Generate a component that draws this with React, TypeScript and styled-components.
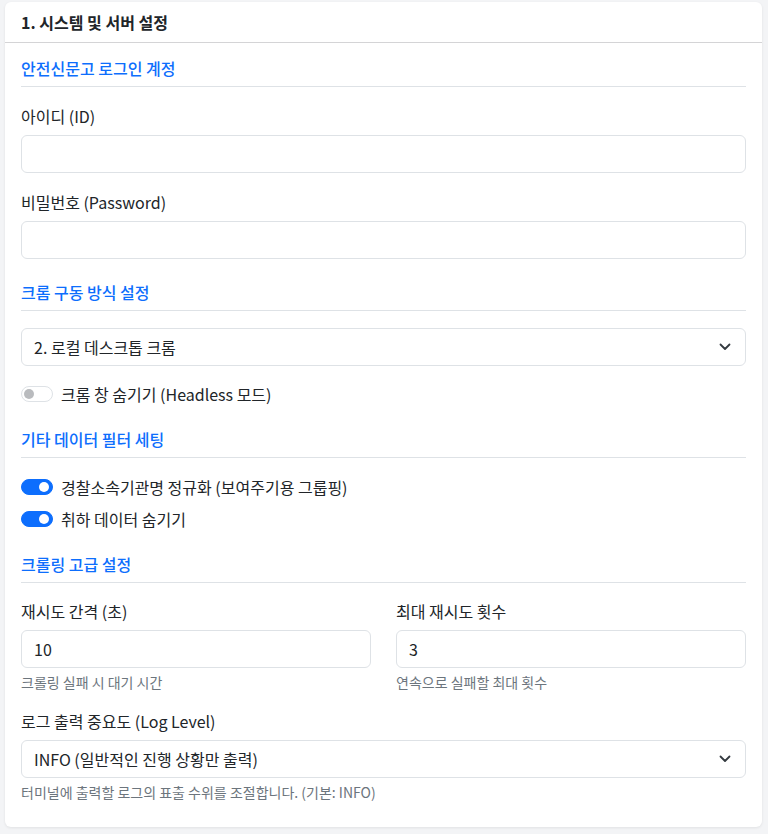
import styled, { createGlobalStyle } from "styled-components";

const GlobalStyle = createGlobalStyle`
  html, body {
    margin: 0;
    padding: 0;
    background: #f3f4f6;
  }
  body {
    font-family: "Noto Sans CJK KR", "Noto Sans", sans-serif;
    color: #212529;
  }
  * {
    box-sizing: border-box;
  }
`;

const Page = styled.div`
  padding: 2px 6px 6px 5px;
`;

const Card = styled.div`
  background: #ffffff;
  border-radius: 6px;
  box-shadow: 0 1px 3px rgba(0, 0, 0, 0.08);
`;

const CardHeader = styled.div`
  padding: 8px 16px;
  height: 41px;
  border-bottom: 1px solid #d4d4d6;
  font-size: 16px;
  font-weight: 700;
  line-height: 24px;
  display: flex;
  align-items: center;
`;

const CardBody = styled.div`
  padding: 13px 16px 24px;
`;

const SectionTitle = styled.div<{ first?: boolean }>`
  margin-top: ${(props) => (props.first ? "0" : "21px")};
  padding-bottom: 6px;
  border-bottom: 1px solid #dee2e6;
  color: #0d6efd;
  font-size: 16px;
  font-weight: 500;
  line-height: 24px;
  margin-bottom: 17px;
`;

const Field = styled.div`
  margin-bottom: 17px;
  &:last-child {
    margin-bottom: 0;
  }
`;

const Label = styled.label`
  display: block;
  font-size: 16px;
  line-height: 24px;
  margin-bottom: 7px;
`;

const Input = styled.input`
  display: block;
  width: 100%;
  height: 38px;
  padding: 0 12px;
  border: 1px solid #dee2e6;
  border-radius: 6px;
  font-family: inherit;
  font-size: 16px;
  color: #212529;
  background: #ffffff;
  outline: none;
`;

const SelectBox = styled.div`
  display: flex;
  align-items: center;
  justify-content: space-between;
  height: 38px;
  padding: 0 14px 0 12px;
  border: 1px solid #dee2e6;
  border-radius: 6px;
  font-size: 16px;
  background: #ffffff;
`;

const Help = styled.div`
  margin-top: 4px;
  font-size: 14px;
  line-height: 21px;
  color: #6c757d;
`;

const Row = styled.div`
  display: grid;
  grid-template-columns: 1fr 1fr;
  column-gap: 25px;
  margin-top: -1px;
  margin-bottom: 16px;
`;

const SwitchList = styled.div<{ spaced?: boolean }>`
  display: flex;
  flex-direction: column;
  gap: 8px;
  margin-top: ${(props) => (props.spaced ? "16px" : "0")};
`;

const SwitchRow = styled.label`
  display: flex;
  align-items: center;
  gap: 8px;
  height: 24px;
  font-size: 16px;
`;

const Track = styled.span<{ on: boolean }>`
  position: relative;
  width: 32px;
  height: 16px;
  border-radius: 8px;
  flex-shrink: 0;
  background: ${(props) => (props.on ? "#0d6efd" : "#ffffff")};
  border: 1px solid ${(props) => (props.on ? "#0d6efd" : "#dee2e6")};
`;

const Knob = styled.span<{ on: boolean }>`
  position: absolute;
  top: 2px;
  left: ${(props) => (props.on ? "17px" : "2px")};
  width: 10px;
  height: 10px;
  border-radius: 50%;
  background: ${(props) => (props.on ? "#ffffff" : "#b9bbbe")};
`;

function Chevron() {
  return (
    <svg width="12" height="8" viewBox="0 0 12 8" fill="none">
      <path
        d="M1.5 1.5L6 6L10.5 1.5"
        stroke="#343a40"
        strokeWidth="1.8"
        strokeLinecap="round"
        strokeLinejoin="round"
      />
    </svg>
  );
}

function Switch({ on, label }: { on: boolean; label: string }) {
  return (
    <SwitchRow>
      <Track on={on}>
        <Knob on={on} />
      </Track>
      {label}
    </SwitchRow>
  );
}

export default function App() {
  return (
    <>
      <GlobalStyle />
      <Page>
        <Card>
          <CardHeader>1. 시스템 및 서버 설정</CardHeader>
          <CardBody>
            <SectionTitle first>안전신문고 로그인 계정</SectionTitle>
            <Field>
              <Label>아이디 (ID)</Label>
              <Input type="text" />
            </Field>
            <Field>
              <Label>비밀번호 (Password)</Label>
              <Input type="password" />
            </Field>

            <SectionTitle>크롬 구동 방식 설정</SectionTitle>
            <SelectBox>
              <span>2. 로컬 데스크톱 크롬</span>
              <Chevron />
            </SelectBox>
            <SwitchList spaced>
              <Switch on={false} label="크롬 창 숨기기 (Headless 모드)" />
            </SwitchList>

            <SectionTitle>기타 데이터 필터 세팅</SectionTitle>
            <SwitchList>
              <Switch on label="경찰소속기관명 정규화 (보여주기용 그룹핑)" />
              <Switch on label="취하 데이터 숨기기" />
            </SwitchList>

            <SectionTitle>크롤링 고급 설정</SectionTitle>
            <Row>
              <div>
                <Label>재시도 간격 (초)</Label>
                <Input type="text" defaultValue="10" />
                <Help>크롤링 실패 시 대기 시간</Help>
              </div>
              <div>
                <Label>최대 재시도 횟수</Label>
                <Input type="text" defaultValue="3" />
                <Help>연속으로 실패할 최대 횟수</Help>
              </div>
            </Row>
            <Field>
              <Label>로그 출력 중요도 (Log Level)</Label>
              <SelectBox>
                <span>INFO (일반적인 진행 상황만 출력)</span>
                <Chevron />
              </SelectBox>
              <Help>터미널에 출력할 로그의 표출 수위를 조절합니다. (기본: INFO)</Help>
            </Field>
          </CardBody>
        </Card>
      </Page>
    </>
  );
}
